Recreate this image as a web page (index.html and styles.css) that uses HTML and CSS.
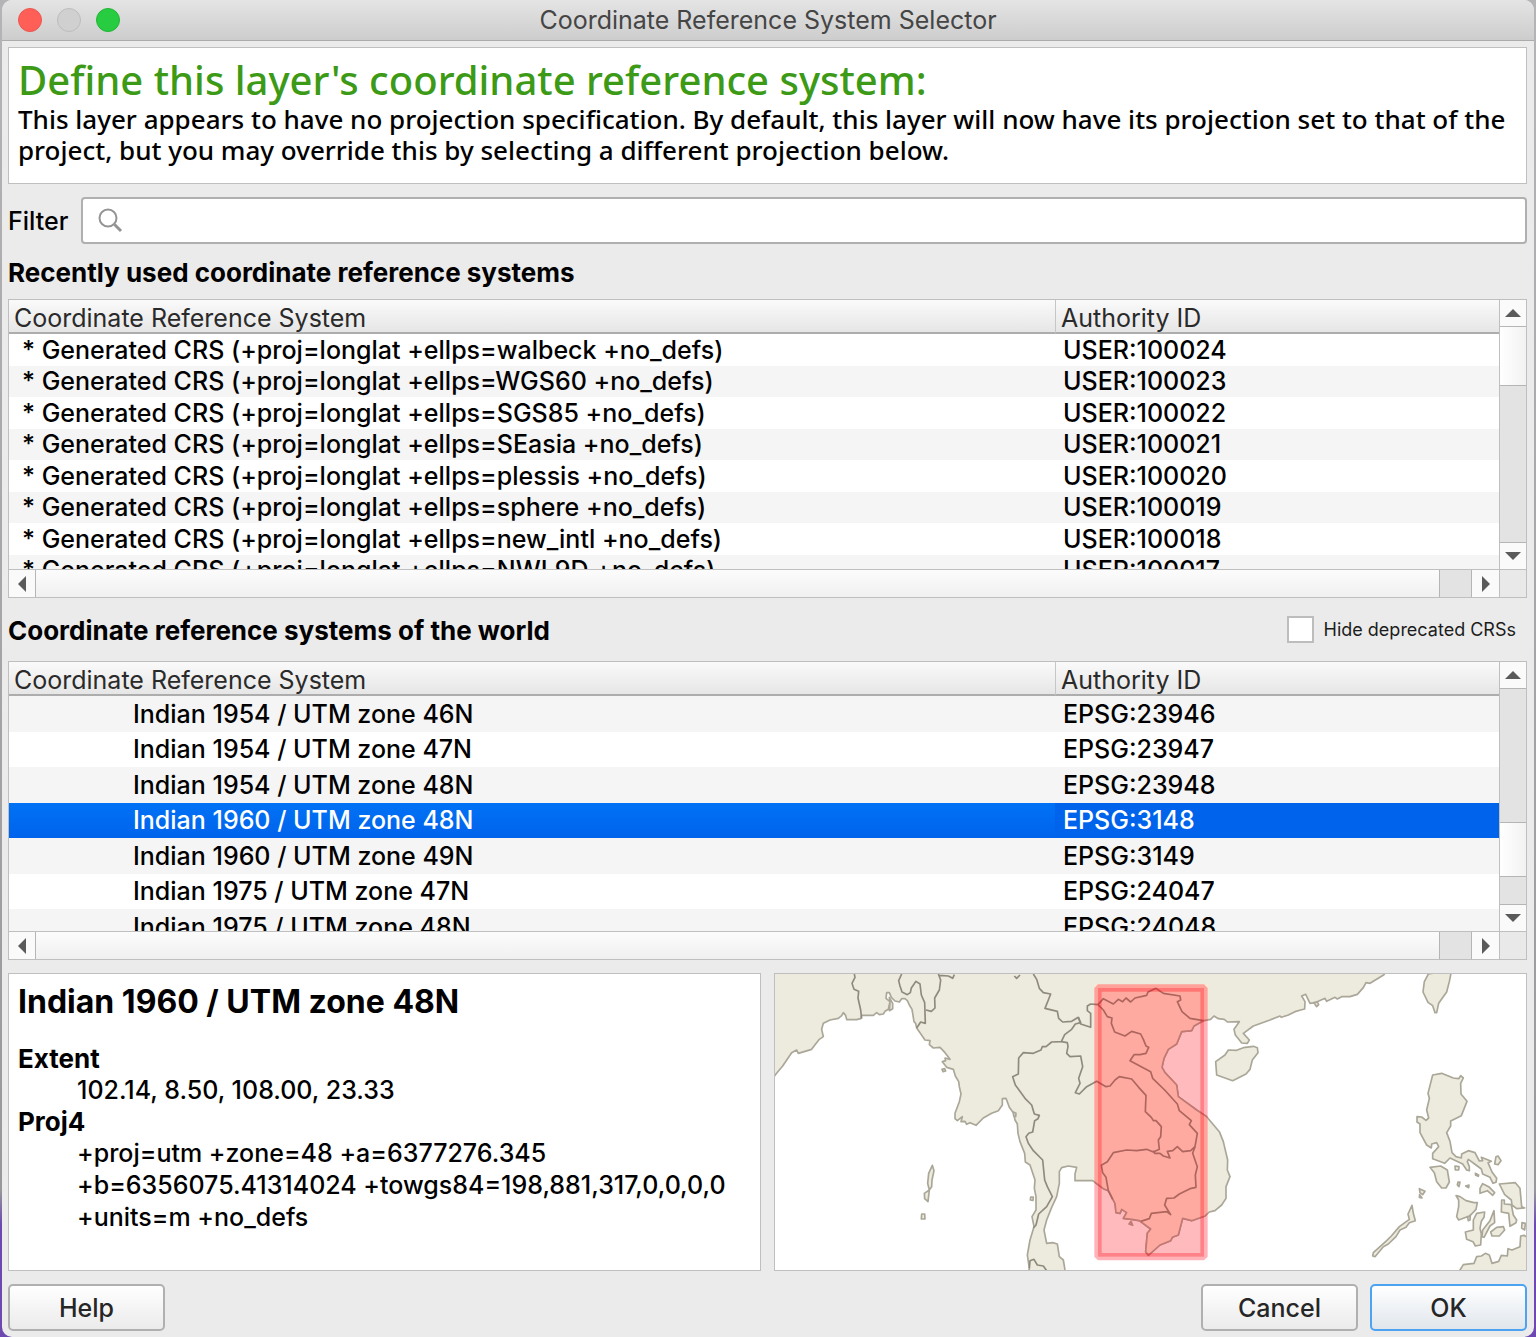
FILE: index.html
```html
<!DOCTYPE html>
<html lang="en">
<head>
    <meta charset="UTF-8">
    <meta name="viewport" content="width=device-width, initial-scale=1.0">
    <title>Coordinate Reference System Selector</title>
    <link rel="stylesheet" href="styles.css">
</head>
<body>

    <div class="window">
        <!-- Title bar -->
        <header class="titlebar">
            <div class="lights">
                <button class="light close" aria-label="Close"></button>
                <button class="light minimize" aria-label="Minimize" disabled></button>
                <button class="light zoom" aria-label="Zoom"></button>
            </div>
            <h1>Coordinate Reference System Selector</h1>
        </header>

        <main class="content">
            <!-- Message -->
            <section class="message">
                <h2>Define this layer's coordinate reference system:</h2>
                <p>This layer appears to have no projection specification. By default, this layer will now have its projection set to that of the project, but you may override this by selecting a different projection below.</p>
            </section>

            <!-- Filter -->
            <div class="filter">
                <label for="filter">Filter</label>
                <div class="filter-box">
                    <svg class="search-icon" viewBox="0 0 26 26" width="26" height="26">
                        <circle cx="10" cy="10" r="8.5"/>
                        <path class="handle" d="M16.5 16.5L23 23"/>
                    </svg>
                    <input type="text" id="filter">
                </div>
            </div>

            <!-- Recently used -->
            <h3 class="section-title">Recently used coordinate reference systems</h3>
            <div class="tree">
                <div class="tree-body">
                    <table class="recent">
                        <thead>
                            <tr><th>Coordinate Reference System</th><th class="authority">Authority ID</th></tr>
                        </thead>
                        <tbody>
                            <tr><td>* Generated CRS (+proj=longlat +ellps=walbeck +no_defs)</td><td>USER:100024</td></tr>
                            <tr><td>* Generated CRS (+proj=longlat +ellps=WGS60 +no_defs)</td><td>USER:100023</td></tr>
                            <tr><td>* Generated CRS (+proj=longlat +ellps=SGS85 +no_defs)</td><td>USER:100022</td></tr>
                            <tr><td>* Generated CRS (+proj=longlat +ellps=SEasia +no_defs)</td><td>USER:100021</td></tr>
                            <tr><td>* Generated CRS (+proj=longlat +ellps=plessis +no_defs)</td><td>USER:100020</td></tr>
                            <tr><td>* Generated CRS (+proj=longlat +ellps=sphere +no_defs)</td><td>USER:100019</td></tr>
                            <tr><td>* Generated CRS (+proj=longlat +ellps=new_intl +no_defs)</td><td>USER:100018</td></tr>
                            <tr><td>* Generated CRS (+proj=longlat +ellps=NWL9D +no_defs)</td><td>USER:100017</td></tr>
                        </tbody>
                    </table>
                </div>
                <div class="vbar">
                    <button class="step up" aria-label="Scroll up"></button>
                    <div class="track"><div class="thumb"></div></div>
                    <button class="step down" aria-label="Scroll down"></button>
                </div>
                <div class="hbar">
                    <button class="step left" aria-label="Scroll left"></button>
                    <div class="track"><div class="thumb"></div></div>
                    <button class="step right" aria-label="Scroll right"></button>
                </div>
                <div class="corner"></div>
            </div>

            <!-- All systems -->
            <div class="world-head">
                <h3 class="section-title">Coordinate reference systems of the world</h3>
                <label class="check"><input type="checkbox"> Hide deprecated CRSs</label>
            </div>
            <div class="tree">
                <div class="tree-body">
                    <table class="world">
                        <thead>
                            <tr><th>Coordinate Reference System</th><th class="authority">Authority ID</th></tr>
                        </thead>
                        <tbody>
                            <tr><td>Indian 1954 / UTM zone 46N</td><td>EPSG:23946</td></tr>
                            <tr><td>Indian 1954 / UTM zone 47N</td><td>EPSG:23947</td></tr>
                            <tr><td>Indian 1954 / UTM zone 48N</td><td>EPSG:23948</td></tr>
                            <tr class="selected"><td>Indian 1960 / UTM zone 48N</td><td>EPSG:3148</td></tr>
                            <tr><td>Indian 1960 / UTM zone 49N</td><td>EPSG:3149</td></tr>
                            <tr><td>Indian 1975 / UTM zone 47N</td><td>EPSG:24047</td></tr>
                            <tr><td>Indian 1975 / UTM zone 48N</td><td>EPSG:24048</td></tr>
                        </tbody>
                    </table>
                </div>
                <div class="vbar world-bar">
                    <button class="step up" aria-label="Scroll up"></button>
                    <div class="track"><div class="thumb"></div></div>
                    <button class="step down" aria-label="Scroll down"></button>
                </div>
                <div class="hbar">
                    <button class="step left" aria-label="Scroll left"></button>
                    <div class="track"><div class="thumb"></div></div>
                    <button class="step right" aria-label="Scroll right"></button>
                </div>
                <div class="corner"></div>
            </div>

            <!-- Details of the selected system -->
            <div class="details">
                <section class="info">
                    <h2>Indian 1960 / UTM zone 48N</h2>
                    <dl>
                        <dt>Extent</dt>
                        <dd>102.14, 8.50, 108.00, 23.33</dd>
                        <dt>Proj4</dt>
                        <dd>+proj=utm +zone=48 +a=6377276.345 +b=6356075.41314024 +towgs84=198,881,317,0,0,0,0 +units=m +no_defs</dd>
                    </dl>
                </section>
                <div class="map">
                    <svg viewBox="15 12 2253 888" preserveAspectRatio="xMidYMid slice" role="img" aria-label="Extent map">
                        <defs>
                            <clipPath id="extent-clip"><rect x="973" y="43" width="340" height="828"/></clipPath>
                        </defs>

                        <!-- mainland -->
                        <path id="mainland" class="land" d="M0 335L18 312L38 288L65 248L80 240L85 250L125 238L135 224L148 208L160 200L155 178L160 160L180 150L205 145L215 137L220 128L227 136L230 149L260 149L272 146L275 136L310 136L320 128L328 134L340 132L345 124L355 118L360 95L348 85L350 68L358 68L364 82L375 93L388 96L395 86L405 86L412 92L418 105L426 118L428 130L432 155L437 160L440 174L450 188L465 210L480 212L478 224L490 234L510 232L525 248L540 268L525 264L527 272L517 275L530 292L550 298L556 318L566 335L568 350L573 372L568 395L555 430L555 446L562 452L577 440L573 455L585 454L590 463L600 458L618 466L640 444L665 430L685 422L697 405L697 386L708 385L718 412L730 428L735 450L742 462L744 490L750 515L764 550L766 576L780 585L795 630L793 655L798 680L798 720L786 740L792 770L780 810L772 855L778 895L770 930L900 930L885 900L880 870L868 860L862 822L848 818L830 820L822 780L830 750L845 712L860 680L868 640L868 605L875 593L895 588L920 592L915 612L915 632L968 632L1000 656L1015 662L1035 700L1038 728L1050 730L1055 718L1070 728L1060 745L1085 748L1108 752L1142 777L1132 790L1127 845L1135 856L1170 825L1202 812L1207 802L1225 795L1238 745L1265 752L1305 738L1318 726L1335 722L1355 705L1368 685L1368 650L1380 620L1372 600L1373 570L1360 515L1348 485L1310 440L1280 420L1225 380L1220 345L1185 308L1176 292L1182 265L1195 238L1220 222L1235 185L1265 182L1272 168L1300 152L1322 148L1332 138L1345 146L1363 148L1372 156L1408 155L1392 178L1396 195L1404 205L1415 219L1432 220L1438 210L1420 190L1450 168L1500 150L1530 138L1534 142L1555 135L1575 125L1592 120L1604 117L1605 95L1595 78L1607 73L1620 100L1635 98L1665 85L1670 94L1695 82L1702 87L1715 80L1740 80L1762 73L1780 53L1788 38L1800 40L1842 14L1850 0L0 0Z"/>
                        <use href="#mainland" class="covered" clip-path="url(#extent-clip)"/>

                        <!-- islands -->
                        <path class="land" d="M358 82L368 100L368 116L358 122L360 100ZM516 298L524 296L527 303L519 305ZM487 586L492 602L486 630L485 650L478 660L473 640L476 610ZM478 660L474 695L464 686L463 670ZM455 732L464 732L465 747L454 747ZM1337 275L1365 255L1375 240L1400 241L1420 233L1450 229L1462 233L1464 248L1447 270L1440 298L1428 312L1388 332L1340 315Z"/>
                        <path class="land" d="M782 681L790 681L789 691L781 690ZM1083 754L1088 766L1077 762ZM730 426L738 430L737 440L731 437ZM1632 98L1642 96L1646 104L1640 110Z"/>
                        <path class="land" d="M1975 12L1963 35L1959 66L1974 97L1988 107L1995 128L2000 128L2006 100L2030 66L2038 35L2045 0Z"/>
                        <path class="land" d="M1988 315L2015 310L2050 324L2066 326L2072 317L2080 324L2072 340L2073 372L2091 394L2074 437L2042 453L2042 468L2030 488L2040 514L2046 548L2058 560L2074 564L2075 552L2095 542L2115 548L2128 573L2138 572L2134 562L2164 574L2154 578L2166 606L2180 625L2178 637L2169 640L2160 622L2138 612L2134 597L2118 585L2095 568L2092 575L2098 590L2098 602L2090 600L2078 582L2040 564L2024 580L1988 566L1988 550L2006 530L2000 518L1985 522L1984 534L1970 525L1950 488L1950 462L1941 456L1941 440L1955 441L1968 451L1976 444L1970 420L1978 385L1974 370Z"/>
                        <path class="land" d="M1980 592L2012 588L2032 600L2038 636L2028 654L2015 654L2000 635L1993 608ZM2055 588L2067 590L2066 600L2056 600ZM2178 560L2184 558L2193 572L2184 584L2174 582ZM2064 636L2070 636L2067 650L2062 645ZM2087 648L2097 645L2096 653ZM2116 610L2126 615L2125 619L2117 616Z"/>
                        <path class="land" d="M2130 670L2130 655L2138 641L2156 650L2174 668L2168 676L2152 662ZM2058 677L2070 680L2088 692L2112 698L2122 698L2118 718L2105 732L2098 738L2066 750L2060 740L2066 710L2066 690ZM2092 740L2101 740L2100 750L2095 752Z"/>
                        <path class="land" d="M2120 730L2144 726L2142 742L2134 754L2130 775L2134 792L2132 825L2116 828L2109 815L2090 808L2086 786L2110 780L2110 750ZM2172 722L2174 758L2160 768L2142 802L2136 800L2138 780L2160 752ZM2180 772L2200 770L2204 780L2188 798L2166 798L2162 786Z"/>
                        <path class="land" d="M2188 642L2236 638L2250 655L2255 710L2264 714L2240 716L2226 705L2224 690L2204 674ZM2195 690L2203 690L2203 702L2224 704L2230 735L2240 750L2238 758L2220 769L2216 730L2194 726ZM2256 758L2266 760L2264 780L2255 774Z"/>
                        <path class="land" d="M2070 900L2080 884L2112 880L2120 860L2134 858L2146 850L2158 855L2166 880L2186 874L2194 856L2212 858L2214 836L2226 840L2250 830L2252 798L2262 796L2285 810L2285 920L2070 920Z"/>
                        <path class="land" d="M1926 706L1930 730L1936 752L1918 758L1908 772L1890 780L1878 800L1855 822L1840 830L1815 860L1808 858L1810 848L1850 812L1864 798L1888 770L1918 748L1914 732ZM1948 656L1965 664L1958 674L1950 668ZM1949 674L1956 684L1948 682Z"/>

                        <!-- borders -->
                        <path class="border" d="M253 12L255 22L246 40L252 58L266 64L264 84L272 120L275 146M395 12L386 32L390 48L396 66L412 74L421 68L424 54L438 34L450 42L454 75L464 98L466 160L452 156L440 174M505 12L512 30L508 60L494 84L495 114L484 124L468 120M508 16L535 18L548 25L553 14M733 18L740 25L750 15"/>
                        <path class="border" d="M790 12L800 28L808 55L820 68L842 72L835 90L825 115L862 124L866 145L878 156L905 154L925 142L932 158L916 162L905 178L884 194L874 215L845 216L828 230L817 230L813 240L790 250L760 248L746 264L745 312L728 320L736 345L765 385L785 405L793 432L808 436L804 446L794 452L788 486L776 490L768 500L775 520L790 542L818 570L824 630L832 650L847 680L830 710L806 732L798 765L790 774"/>
                        <path class="border" d="M874 215L892 218L894 230L890 250L900 260L932 258L938 290L926 325L930 340L916 368L928 372L950 350L980 334L1008 350L1020 348L1035 330L1048 320L1085 327L1106 352L1128 376L1126 425L1144 442L1150 452L1158 452L1174 470L1172 500L1165 510L1168 538L1150 546L1130 538L1100 542L1070 540L1030 548L1012 575L994 586L998 608L1008 622L1015 662L1028 688"/>
                        <path class="border" d="M925 142L932 162L962 172L962 130L952 122L952 108L962 102L984 104L1000 120L1012 140L1026 144L1024 160L1034 186L1065 198L1085 184L1112 192L1120 208L1128 228L1136 232L1128 250L1110 254L1092 254L1080 272L1142 305L1148 325L1184 360L1222 402L1228 422L1264 452L1258 464L1282 490L1275 530L1262 542L1238 545L1222 530L1208 542L1192 544L1200 564L1180 558L1170 550L1154 550L1150 542"/>
                        <path class="border" d="M984 104L1000 86L1030 102L1045 88L1058 95L1068 84L1082 96L1095 84L1130 76L1134 66L1158 55L1180 70L1230 78L1232 90L1222 95L1236 125L1260 145L1300 152M1275 530L1268 550L1282 590L1276 615L1278 652L1260 656L1228 672L1212 684L1190 685L1184 705L1202 734L1190 725L1144 730L1138 746L1112 754M778 895L780 872L792 868L802 885L820 888L832 905"/>

                        <!-- extent of the selected system -->
                        <rect class="extent" x="984" y="54" width="318" height="806"/>
                    </svg>
                </div>
            </div>

            <!-- Dialog buttons -->
            <footer class="buttons">
                <button class="btn">Help</button>
                <span class="spacer"></span>
                <button class="btn">Cancel</button>
                <button class="btn default">OK</button>
            </footer>
        </main>
    </div>

</body>
</html>
```
FILE: styles.css
```css
* {
    box-sizing: border-box;
}

body {
    margin: 0;
    padding: 0 2px;
    min-height: 100vh;
    font-family: Inter, "Liberation Sans", sans-serif;
    font-size: 25px;
    color: #000;
    background: linear-gradient(#b4b4b6 0, #98989a 1190px, #6c48b0 1225px, #6c48b0 100%);
}

h1, h2, h3, p, dl, dd {
    margin: 0;
}

button {
    font-family: inherit;
    padding: 0;
}

.window {
    background: #ebebeb;
    border-radius: 10px;
    overflow: hidden;
}

/* Title bar */
.titlebar {
    position: relative;
    height: 41px;
    background: linear-gradient(#e4e4e4, #cdcdcd);
    border-bottom: 1px solid #ababab;
}

.titlebar h1 {
    font-size: 25px;
    font-weight: 400;
    line-height: 41px;
    text-align: center;
    color: #454545;
}

.lights {
    position: absolute;
    top: 8px;
    left: 16px;
    display: flex;
    gap: 15px;
}

.light {
    width: 24px;
    height: 24px;
    border: 1px solid #bcbcbc;
    border-radius: 50%;
    background: #d0d0d0;
}

.light.close {
    background: #ff5f57;
    border-color: #ec564f;
}

.light.zoom {
    background: #28cc40;
    border-color: #20b634;
}

.content {
    padding: 6px 7px 6px 6px;
}

/* Message */
.message {
    height: 137px;
    padding: 8px 9px;
    background: #fff;
    border: 1px solid #bfbfbf;
    font-family: "Noto Sans", sans-serif;
}

.message h2 {
    font-size: 40px;
    font-weight: 500;
    line-height: 48px;
    color: #3c9a17;
}

.message p {
    font-size: 26px;
    font-weight: 500;
    line-height: 31px;
}

/* Filter */
.filter {
    display: flex;
    align-items: center;
    gap: 13px;
    margin-top: 13px;
}

.filter label {
    font-weight: 500;
}

.filter-box {
    position: relative;
    flex: 1;
}

.filter-box input {
    display: block;
    width: 100%;
    height: 47px;
    padding: 0 12px 0 50px;
    border: 2px solid #b0b0b0;
    border-radius: 4px;
    background: #fff;
    font: inherit;
}

.search-icon {
    position: absolute;
    top: 11px;
    left: 17px;
    fill: none;
    stroke: #949494;
    stroke-width: 2;
}

.search-icon .handle {
    stroke-width: 3;
}

.section-title {
    padding-top: 2px;
    font-size: 26px;
    font-weight: 700;
    line-height: 53px;
}

/* Tree views */
.tree {
    display: grid;
    grid-template-columns: 1fr 27px;
    grid-template-rows: 269px 28px;
    border: 1px solid #bfbfbf;
    background: #fff;
}

.tree-body {
    overflow: hidden;
}

table {
    width: 100%;
    table-layout: fixed;
    border-collapse: separate;
    border-spacing: 0;
}

th {
    height: 34px;
    padding: 5px 0 0 5px;
    border-bottom: 2px solid #adadad;
    background: linear-gradient(#fafafa, #e6e6e6);
    font-weight: 400;
    line-height: 27px;
    text-align: left;
    color: #2a2a2a;
}

th.authority {
    width: 444px;
    border-left: 1px solid #c6c6c6;
}

td {
    padding: 0 0 0 8px;
    line-height: 31px;
    font-weight: 500;
    white-space: nowrap;
}

.recent td:first-child {
    padding-left: 13px;
}

.recent tr:nth-child(odd) td {
    height: 32px;
}

.recent tr:nth-child(even) td {
    height: 31px;
    background: #f5f5f5;
}

.world td:first-child {
    padding-left: 124px;
}

.world tr:nth-child(even) td {
    height: 35px;
}

.world tr:nth-child(odd) td {
    height: 36px;
    background: #f5f5f5;
}

.world tr.selected td {
    background: #0063ec;
    color: #fff;
}

.world tr.selected td:first-child {
    background: linear-gradient(#0072f5, #0063ec);
}

/* Scroll bars */
.vbar, .hbar {
    display: flex;
    background: #e3e3e3;
}

.vbar {
    flex-direction: column;
    border-left: 1px solid #bfbfbf;
}

.hbar {
    border-top: 1px solid #bfbfbf;
}

.track {
    flex: 1;
}

.vbar .thumb {
    height: 59px;
    border-bottom: 1px solid #b5b5b5;
    background: linear-gradient(90deg, #fff, #f2f2f2);
}

.vbar.world-bar .thumb {
    height: 55px;
    margin-top: 133px;
    border-top: 1px solid #b5b5b5;
}

.hbar .thumb {
    height: 100%;
    margin-right: 31px;
    border-right: 1px solid #b5b5b5;
    background: linear-gradient(#fcfcfc, #f0f0f0);
}

.step {
    display: flex;
    align-items: center;
    justify-content: center;
    border: 0 solid #b5b5b5;
    background: #fafafa;
}

.step::before {
    content: "";
    border: 8px solid transparent;
}

.vbar .step {
    height: 27px;
}

.hbar .step {
    width: 27px;
}

.step.up {
    border-bottom-width: 1px;
}

.step.up::before {
    border-width: 0 8px 8px;
    border-bottom-color: #5a5a5a;
}

.step.down {
    border-top-width: 1px;
}

.step.down::before {
    border-width: 8px 8px 0;
    border-top-color: #5a5a5a;
}

.step.left {
    border-right-width: 1px;
}

.step.left::before {
    border-width: 8px 8px 8px 0;
    border-right-color: #5a5a5a;
}

.hbar .step.right {
    width: 28px;
    border-left-width: 1px;
}

.step.right::before {
    border-width: 8px 0 8px 8px;
    border-left-color: #5a5a5a;
}

.corner {
    border-top: 1px solid #bfbfbf;
    border-left: 1px solid #bfbfbf;
    background: #e9e9e9;
}

.world-head {
    display: flex;
    align-items: center;
    justify-content: space-between;
    padding: 4px 11px 4px 0;
}

.check {
    display: flex;
    align-items: center;
    gap: 10px;
    font-size: 18px;
    color: #1c1c1c;
}

.check input {
    appearance: none;
    width: 27px;
    height: 27px;
    margin: 0;
    border: 2px solid #bdbdbd;
    background: #fff;
}

/* Details */
.details {
    display: grid;
    grid-template-columns: 1fr 1fr;
    gap: 13px;
    margin-top: 13px;
}

.info, .map {
    height: 298px;
    border: 1px solid #bfbfbf;
    background: #fff;
}

.info {
    padding: 8px 9px;
}

.info h2 {
    font-size: 32px;
    font-weight: 700;
    line-height: 40px;
    margin-bottom: 21px;
}

.info dt {
    font-size: 26px;
    font-weight: 700;
    line-height: 31px;
}

.info dd {
    margin-left: 59px;
    font-weight: 500;
    line-height: 32px;
}

.map svg {
    display: block;
    width: 100%;
    height: 100%;
}

.land {
    fill: var(--land, #edeade);
    stroke: #aaa798;
    stroke-width: 5;
    stroke-linejoin: round;
}

/* Warmer land below the extent box */
.covered {
    --land: #ffe9d6;
}

.border {
    fill: none;
    stroke: #8f8b7c;
    stroke-width: 5;
    stroke-linejoin: round;
}

.extent {
    fill: rgba(255, 0, 15, 0.27);
    stroke: rgba(255, 0, 15, 0.3);
    stroke-width: 22;
    stroke-linejoin: bevel;
}

/* Dialog buttons */
.buttons {
    display: flex;
    gap: 12px;
    margin-top: 13px;
}

.spacer {
    flex: 1;
}

.btn {
    width: 157px;
    height: 47px;
    border: 2px solid #b0b0b0;
    border-radius: 5px;
    background: linear-gradient(#fff, #ebebeb);
    font-size: 25px;
    font-weight: 500;
    color: #262626;
}

.btn.default {
    border-color: #4ba3f2;
    background: linear-gradient(#fff, #e0e6ec);
}
```
